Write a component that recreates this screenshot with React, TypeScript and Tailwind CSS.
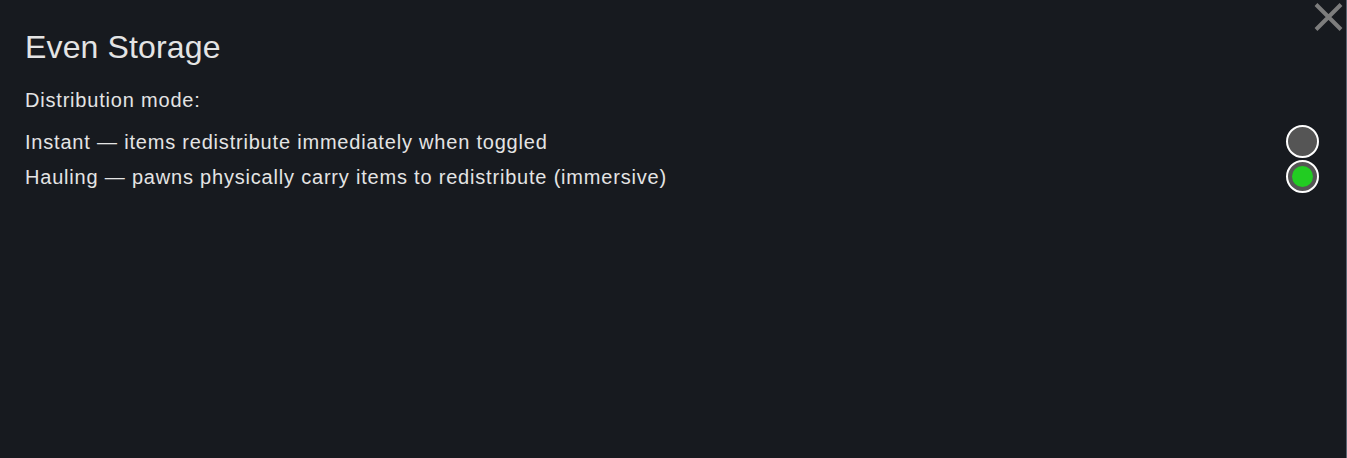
import React from "react";

function Radio({ selected }: { selected: boolean }) {
  return (
    <div className="flex h-[33px] w-[33px] items-center justify-center rounded-full border-[2.5px] border-white bg-[#555555]">
      {selected && <div className="h-[21px] w-[21px] rounded-full bg-[#22cc22]" />}
    </div>
  );
}

export default function App() {
  const options = [
    { label: "Instant — items redistribute immediately when toggled", selected: false },
    { label: "Hauling — pawns physically carry items to redistribute (immersive)", selected: true },
  ];
  return (
    <div
      className="relative h-[458px] w-full border-r border-[#5b6573] bg-[#171a1f] text-[#e4e4e4]"
      style={{ fontFamily: '"Liberation Sans", Arial, sans-serif' }}
    >
      <button className="absolute right-[3px] top-[3px] h-[28px] w-[29px] text-[#7d7d7d]">
        <svg viewBox="0 0 29 28" className="h-full w-full">
          <path d="M2 1.5 L27 26.5 M27 1.5 L2 26.5" stroke="currentColor" strokeWidth="4" fill="none" />
        </svg>
      </button>
      <div className="flex flex-col pl-[25px] pr-[27px] pt-[31px]">
        <h1 className="text-[32px] leading-none tracking-[0.15px]">Even Storage</h1>
        <div className="mt-[27px] text-[20px] leading-none tracking-[0.8px]">Distribution mode:</div>
        <div className="mt-[14px] flex flex-col">
          {options.map((o) => (
            <div key={o.label} className="flex h-[35px] items-center justify-between">
              <span className="text-[20px] leading-none tracking-[0.8px]">{o.label}</span>
              <Radio selected={o.selected} />
            </div>
          ))}
        </div>
      </div>
    </div>
  );
}
